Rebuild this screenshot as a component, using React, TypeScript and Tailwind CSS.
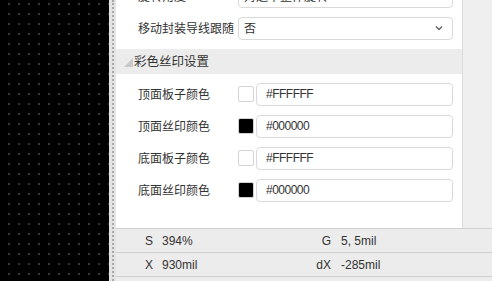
import React from 'react';

interface ColorRow {
  label: string;
  value: string;
  swatch: string;
}

const colorRows: ColorRow[] = [
  { label: '顶面板子颜色', value: '#FFFFFF', swatch: 'bg-white' },
  { label: '顶面丝印颜色', value: '#000000', swatch: 'bg-black' },
  { label: '底面板子颜色', value: '#FFFFFF', swatch: 'bg-white' },
  { label: '底面丝印颜色', value: '#000000', swatch: 'bg-black' },
];

const cjk = "font-['Microsoft_YaHei','Noto_Sans_CJK_SC',sans-serif]";
const latin = "font-['Liberation_Sans',Arial,sans-serif]";

const App: React.FC = () => {
  return (
    <div className="w-[492px] h-[281px] flex overflow-hidden bg-white text-[#333]">
      {/* Canvas */}
      <div className="w-[109px] h-full shrink-0 bg-black bg-[radial-gradient(circle,#747474_0.5px,transparent_0.9px)] bg-[length:10px_10px] bg-[position:4px_-1px]" />

      {/* Splitter */}
      <div className="w-[7px] h-full shrink-0 bg-[#e4e4e4] flex">
        <div className="ml-[3px] h-full border-l-2 border-dotted border-[#a8a8a8]" />
      </div>

      {/* Right side */}
      <div className="flex-1 flex flex-col h-full">
        <div className="h-[228px] flex overflow-hidden">
          {/* Property panel */}
          <div className={`w-[346px] shrink-0 bg-white ${cjk} text-[12px] whitespace-nowrap`}>
            <div className="-mt-[20px]">
              <div className="h-8 flex items-center pl-[22px]">
                <span className="w-[100px]">旋转角度</span>
                <div className="w-[215px] h-[23px] border border-[#d9d9d9] rounded-sm flex items-center pl-[5px]">
                  对选中整体旋转
                </div>
              </div>
              <div className="h-8 flex items-center pl-[22px]">
                <span className="w-[100px]">移动封装导线跟随</span>
                <div className="w-[215px] h-[23px] border border-[#d9d9d9] rounded-sm flex items-center justify-between pl-[5px] pr-[9px]">
                  <span>否</span>
                  <svg width="8" height="6" viewBox="0 0 8 6">
                    <path d="M1 1.5 L4 4.5 L7 1.5" fill="none" stroke="#666" strokeWidth="1.5" />
                  </svg>
                </div>
              </div>
            </div>

            {/* Section header */}
            <div className="mt-[5px] h-[25px] bg-[#ececec] flex items-center pl-[8px] text-[12.5px]">
              <svg width="9" height="9" viewBox="0 0 9 9" className="mt-[2px]">
                <polygon points="9,0 9,9 0,9" fill="#c8c8c8" />
              </svg>
              <span className="ml-[1px]">彩色丝印设置</span>
            </div>

            <div className="pt-[4px]">
              {colorRows.map((row) => (
                <div key={row.label} className="h-8 flex items-center pl-[22px]">
                  <span className="w-[100px]">{row.label}</span>
                  <div className={`w-4 h-4 border border-[#d4d4d4] rounded-[2px] ${row.swatch}`} />
                  <div className={`ml-[2px] w-[197px] h-[23px] border border-[#d9d9d9] rounded-sm flex items-center pl-[9px] ${latin} text-[12px] tracking-[-0.5px]`}>
                    {row.value}
                  </div>
                </div>
              ))}
            </div>
          </div>

          {/* Scroll gutter */}
          <div className="flex-1 bg-[#efefef] border-l border-[#dcdcdc]" />
        </div>

        {/* Status bar */}
        <div className={`flex-1 bg-[#ececec] ${latin} text-[12px]`}>
          <div className="h-[24px] border-t border-[#d0d0d0] flex items-center">
            <div className="w-[170px] flex">
              <span className="w-[37px] text-right">S</span>
              <span className="ml-[9px]">394%</span>
            </div>
            <div className="flex">
              <span className="w-[45px] text-right">G</span>
              <span className="ml-[10px]">5, 5mil</span>
            </div>
          </div>
          <div className="h-[24px] border-t border-[#d0d0d0] flex items-center">
            <div className="w-[170px] flex">
              <span className="w-[37px] text-right">X</span>
              <span className="ml-[9px]">930mil</span>
            </div>
            <div className="flex">
              <span className="w-[45px] text-right">dX</span>
              <span className="ml-[10px]">-285mil</span>
            </div>
          </div>
          <div className="h-[5px] border-t border-[#d0d0d0]" />
        </div>
      </div>
    </div>
  );
};

export default App;
